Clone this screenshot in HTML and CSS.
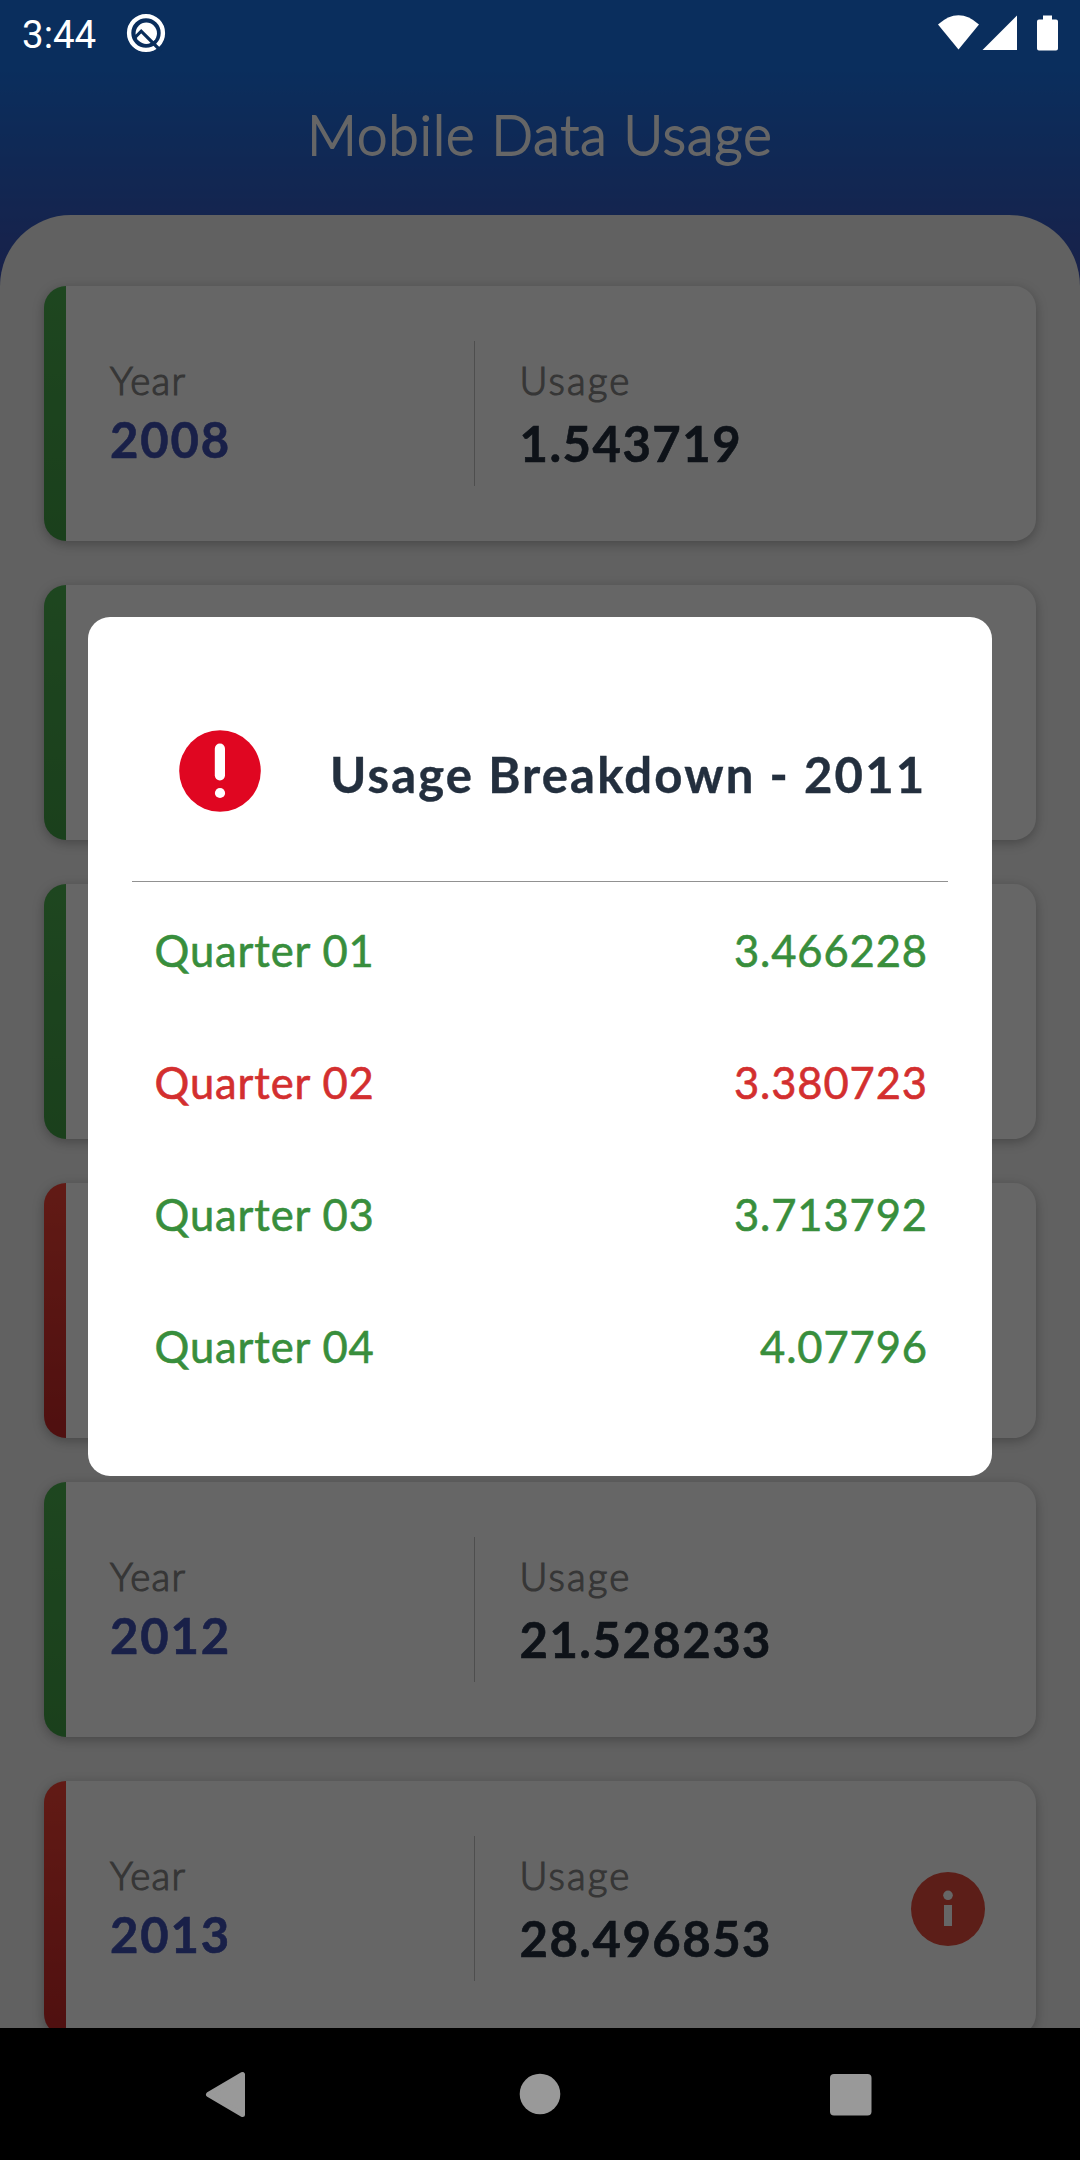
FILE: index.html
```html
<!DOCTYPE html>
<html lang="en">
<head>
<meta charset="utf-8">
<title>Mobile Data Usage</title>
<link rel="stylesheet" href="styles.css">
</head>
<body>
<div class="screen">
  <div class="app">
    <header class="app-header"><h1 class="app-title">Mobile Data Usage</h1></header>
    <main class="sheet">
      <article class="card up">
        <div class="col year"><span class="label">Year</span><strong class="year-value">2008</strong></div>
        <div class="col usage"><span class="label wide">Usage</span><strong class="usage-value">1.543719</strong></div>
      </article>
      <article class="card up"></article>
      <article class="card up"></article>
      <article class="card down"></article>
      <article class="card up">
        <div class="col year"><span class="label">Year</span><strong class="year-value">2012</strong></div>
        <div class="col usage"><span class="label wide">Usage</span><strong class="usage-value">21.528233</strong></div>
      </article>
      <article class="card down">
        <div class="col year"><span class="label">Year</span><strong class="year-value">2013</strong></div>
        <div class="col usage"><span class="label wide">Usage</span><strong class="usage-value">28.496853</strong></div>
        <svg class="info" viewBox="0 0 74 74"><circle cx="37" cy="37" r="37" fill="#e74c3c"/><circle cx="37" cy="23.3" r="4.8" fill="#fff"/><rect x="33" y="33" width="8" height="21" fill="#fff"/></svg>
      </article>
    </main>
  </div>

  <div class="scrim">
    <section class="dialog">
      <div class="dialog-head">
        <svg class="alert" viewBox="0 0 82 82"><circle cx="41" cy="41" r="40.8" fill="#e00621"/><rect x="35.8" y="13.6" width="10.2" height="36.8" rx="5.1" fill="#fff"/><circle cx="41" cy="63" r="5.1" fill="#fff"/></svg>
        <h2 class="dialog-title">Usage Breakdown - 2011</h2>
      </div>
      <div class="rows">
        <div class="row good"><span>Quarter 01</span><span>3.466228</span></div>
        <div class="row bad"><span>Quarter 02</span><span>3.380723</span></div>
        <div class="row good"><span>Quarter 03</span><span>3.713792</span></div>
        <div class="row good"><span>Quarter 04</span><span>4.07796</span></div>
      </div>
    </section>
  </div>

  <div class="status">
    <span class="clock">3:44</span>
    <svg class="debug" viewBox="0 0 40 40">
      <circle cx="20" cy="20" r="16.9" fill="none" stroke="#fff" stroke-width="4.4"/>
      <circle cx="20.3" cy="20.3" r="10.7" fill="#fff"/>
      <path d="M8 25.5 L15.2 18.2 L35 38" fill="none" stroke="#0a2e5b" stroke-width="3.2"/>
    </svg>
    <svg class="system" viewBox="0 0 120 36" fill="#fff">
      <path d="M0 9.5 Q20.5 -9 41 9.5 L20.5 34.5 Z"/>
      <path d="M79 .5 V35 H44.5 Z"/>
      <path d="M105 .5 h9 v4 h4 a2 2 0 0 1 2 2 V33.5 a2 2 0 0 1 -2 2 H101 a2 2 0 0 1 -2 -2 V6.5 a2 2 0 0 1 2 -2 h4 Z"/>
    </svg>
  </div>

  <nav class="nav">
    <svg viewBox="0 0 48 48"><path d="M37.5 4.500 V44.500 L3.500 24.500 Z" fill="#999" stroke="#999" stroke-width="5" stroke-linejoin="round"/></svg>
    <svg viewBox="0 0 48 48"><circle cx="24" cy="24" r="20.3" fill="#999"/></svg>
    <svg viewBox="0 0 48 48"><rect x="3" y="4" width="41.5" height="41.5" rx="4" fill="#999"/></svg>
  </nav>
</div>
</body>
</html>
```
FILE: styles.css
```css
* { box-sizing: border-box; }
body { margin: 0; font-family: Lato, "Open Sans", sans-serif; }
h1, h2 { margin: 0; }
svg { display: block; flex: none; }

.screen {
  position: relative;
  display: flex;
  flex-direction: column;
  width: 1080px;
  height: 2160px;
  overflow: hidden;
  background: #000;
}
.app {
  flex: none;
  height: 2028px;
  overflow: hidden;
  background: linear-gradient(#1a73e8 70px, #3f51b5 285px);
}
.app-header {
  height: 214.5px;
  padding-top: 107px;
  text-align: center;
}
.app-title {
  color: #fff;
  font-size: 54.5px;
  line-height: 54px;
  font-weight: 300;
  letter-spacing: 1.1px;
  -webkit-text-stroke: 1.8px #fff;
}
.sheet {
  display: flex;
  flex-direction: column;
  gap: 44px;
  height: 1900px;
  padding: 71.5px 44px 0;
  border-radius: 71px 71px 0 0;
  background: #f2f2f2;
}
.card {
  display: flex;
  flex: none;
  height: 255px;
  border-radius: 22px;
  box-shadow: 0 3px 12px rgba(0, 0, 0, .28);
  background: linear-gradient(var(--from), var(--to)) left / 22px 100% no-repeat #fff;
}
.up { --from: #4caf50; --to: #43a047; }
.down { --from: #f44336; --to: #c62828; }
.col {
  display: flex;
  flex-direction: column;
  padding-top: 71px;
}
.year {
  width: 431px;
  padding-left: 66px;
  background: linear-gradient(#c3c3c3, #c3c3c3) right 55px / 1px 145px no-repeat;
}
.usage { flex: 1; padding-left: 44.5px; }
.label {
  color: #888;
  font-size: 38.5px;
  line-height: 47px;
  font-weight: 300;
  letter-spacing: 1.3px;
  -webkit-text-stroke: 1.2px #888;
}
.wide { letter-spacing: 2.1px; }
.year-value, .usage-value {
  font-size: 49px;
  line-height: 60px;
  font-weight: 700;
}
.year-value {
  margin-top: 5px;
  color: #3f51b5;
  letter-spacing: 1.8px;
  -webkit-text-stroke: .6px #3f51b5;
}
.usage-value {
  margin-top: 9px;
  color: #232f3e;
  letter-spacing: 1.5px;
  -webkit-text-stroke: .6px #232f3e;
}
.info {
  width: 74px;
  height: 74px;
  margin: 91px 51px 0 0;
}

/* Dimmed layer with the breakdown dialog */
.scrim {
  position: absolute;
  inset: 0 0 132px;
  padding: 617px 88px 0;
  background: rgba(0, 0, 0, .6);
}
.dialog {
  height: 859px;
  border-radius: 22px;
  padding: 0 44px;
  background: #fff;
}
.dialog-head {
  display: flex;
  height: 265px;
  padding-left: 47px;
  border-bottom: 1px solid #919191;
}
.alert {
  width: 82px;
  height: 82px;
  margin-top: 113px;
}
.dialog-title {
  margin: 127px 0 0 69px;
  color: #232f3e;
  font-size: 49px;
  line-height: 60px;
  font-weight: 700;
  letter-spacing: 2.15px;
  white-space: nowrap;
  -webkit-text-stroke: .4px #232f3e;
}
.rows { padding-top: 2px; }
.row {
  display: flex;
  justify-content: space-between;
  padding: 0 20px 0 22.5px;
  font-size: 43.5px;
  line-height: 132px;
  letter-spacing: .9px;
  -webkit-text-stroke: .6px currentColor;
}
.good { color: #388e3c; }
.bad { color: #d32f2f; }

.status {
  position: absolute;
  inset: 0 0 auto;
  display: flex;
  height: 66px;
  padding: 0 22px;
  color: #fff;
}
.clock {
  width: 104px;
  font: 38.5px/70px Roboto, sans-serif;
}
.debug { width: 40px; height: 40px; margin-top: 13px; }
.system { width: 120px; height: 36px; margin: 15px 0 0 auto; }

.nav {
  display: flex;
  align-items: center;
  justify-content: center;
  gap: 263px;
  height: 132px;
}
.nav svg { width: 48px; height: 48px; }
```
